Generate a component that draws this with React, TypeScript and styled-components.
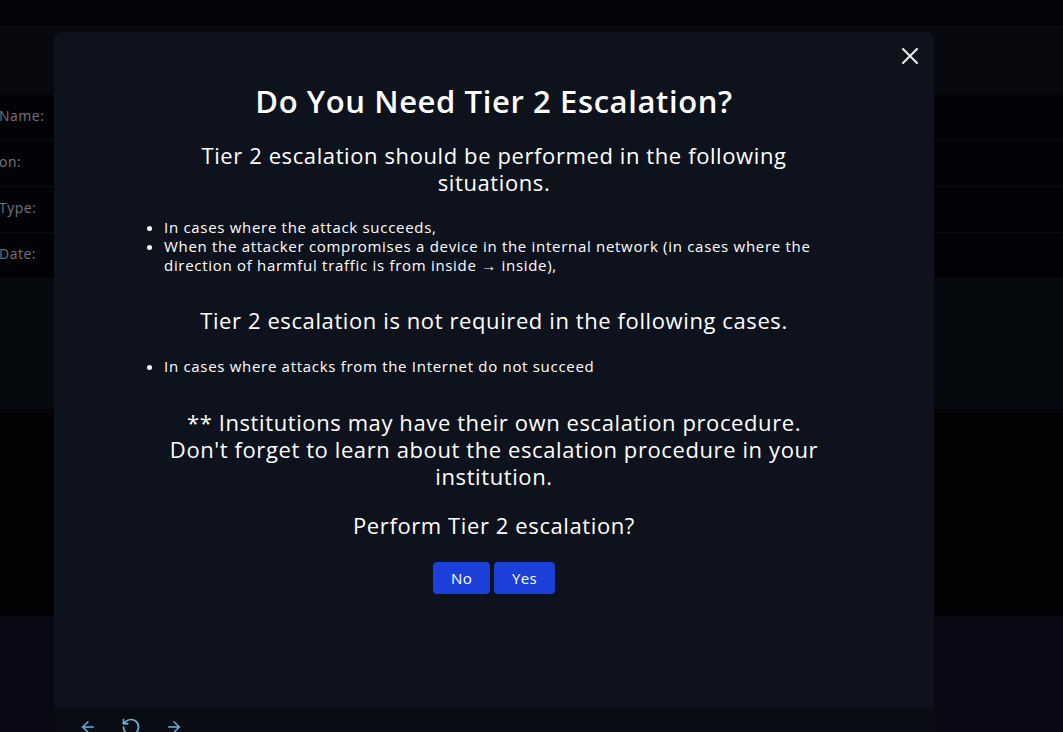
import React from 'react';
import styled, { createGlobalStyle } from 'styled-components';
import { X, ArrowLeft, ArrowRight, RotateCcw } from 'lucide-react';

const GlobalStyle = createGlobalStyle`
	html, body {
		margin: 0;
		padding: 0;
		height: 100%;
		overflow: hidden;
		background: #030306;
		font-family: 'Open Sans', 'Noto Sans', sans-serif;
	}
	#root {
		height: 100%;
	}
`;

const Page = styled.div`
	position: relative;
	display: flex;
	flex-direction: column;
	height: 732px;
`;

const TopBar = styled.div`
	height: 26px;
	background: #040408;
`;

const HeaderBand = styled.div`
	height: 69px;
	background: #07090e;
`;

const Row = styled.div`
	display: flex;
	align-items: center;
	height: 46px;
	padding-bottom: 4px;
	background: #030307;
	border-bottom: 1px solid #0c0d13;
	box-sizing: border-box;
`;

const Label = styled.span`
	margin-left: -1px;
	font-size: 14px;
	letter-spacing: 0.5px;
	color: #74747c;
`;

const InfoBand = styled.div`
	height: 130px;
	background: #060a0f;
`;

const DarkBand = styled.div`
	height: 207px;
	background: #030306;
`;

const PurpleBand = styled.div`
	flex: 1;
	background: #0a0814;
`;

const Modal = styled.div`
	position: absolute;
	top: 32px;
	left: 54px;
	width: 880px;
	display: flex;
	flex-direction: column;
`;

const ModalBody = styled.div`
	position: relative;
	height: 675px;
	box-sizing: border-box;
	padding: 51px 0 0;
	background: #0e121c;
	border-radius: 8px 8px 0 0;
	display: flex;
	flex-direction: column;
	align-items: center;
	color: #ffffff;
`;

const CloseButton = styled.button`
	position: absolute;
	top: 10px;
	right: 10px;
	display: flex;
	padding: 0;
	border: none;
	background: none;
	color: #e6e8ee;
	cursor: pointer;
`;

const Content = styled.div`
	width: 708px;
	display: flex;
	flex-direction: column;
	align-items: center;
	text-align: center;
`;

const Title = styled.h1`
	margin: 0;
	font-size: 31px;
	line-height: 36px;
	font-weight: 600;
	letter-spacing: 0.6px;
`;

const Subtitle = styled.h2<{ $top: number }>`
	margin: ${({ $top }) => $top}px 0 0;
	padding: 0 20px;
	font-size: 22px;
	line-height: 27px;
	font-weight: 400;
	letter-spacing: 0.6px;
`;

const List = styled.ul<{ $top: number }>`
	align-self: stretch;
	margin: ${({ $top }) => $top}px 0 0;
	padding: 0 0 0 24px;
	text-align: left;
	font-size: 15px;
	line-height: 19px;
	letter-spacing: 0.7px;
`;

const Question = styled(Subtitle)`
	font-size: 22px;
`;

const Buttons = styled.div`
	display: flex;
	gap: 4px;
	margin-top: 23px;
`;

const ActionButton = styled.button<{ $width: number }>`
	width: ${({ $width }) => $width}px;
	height: 32px;
	border: none;
	border-radius: 4px;
	background: #1b3fd8;
	color: #ffffff;
	font-family: inherit;
	font-size: 15px;
	font-weight: 500;
	letter-spacing: 0.4px;
	cursor: pointer;
`;

const Footer = styled.div`
	display: flex;
	align-items: center;
	gap: 24px;
	height: 40px;
	padding: 0 0 0 25px;
	background: #090c13;
	color: #6cb2df;
`;

const rows = ['Name:', 'on:', 'Type:', 'Date:'];

export default function App(): React.ReactElement {
	return (
		<>
			<GlobalStyle />
			<Page>
				<TopBar />
				<HeaderBand />
				{rows.map((label) => (
					<Row key={label}>
						<Label>{label}</Label>
					</Row>
				))}
				<InfoBand />
				<DarkBand />
				<PurpleBand />

				<Modal>
					<ModalBody>
						<CloseButton aria-label="Close">
							<X size={28} strokeWidth={1.8} />
						</CloseButton>
						<Content>
							<Title>Do You Need Tier 2 Escalation?</Title>
							<Subtitle $top={23}>
								Tier 2 escalation should be performed in the following situations.
							</Subtitle>
							<List $top={22}>
								<li>In cases where the attack succeeds,</li>
								<li>
									When the attacker compromises a device in the internal network (in cases where
									the direction of harmful traffic is from inside → inside),
								</li>
							</List>
							<Subtitle $top={32}>Tier 2 escalation is not required in the following cases.</Subtitle>
							<List $top={23}>
								<li>In cases where attacks from the Internet do not succeed</li>
							</List>
							<Subtitle $top={33}>
								** Institutions may have their own escalation procedure. Don't forget to learn about
								the escalation procedure in your institution.
							</Subtitle>
							<Question $top={22}>Perform Tier 2 escalation?</Question>
							<Buttons>
								<ActionButton $width={57}>No</ActionButton>
								<ActionButton $width={61}>Yes</ActionButton>
							</Buttons>
						</Content>
					</ModalBody>
					<Footer>
						<ArrowLeft size={18} strokeWidth={2} />
						<RotateCcw size={20} strokeWidth={2} />
						<ArrowRight size={18} strokeWidth={2} />
					</Footer>
				</Modal>
			</Page>
		</>
	);
}
